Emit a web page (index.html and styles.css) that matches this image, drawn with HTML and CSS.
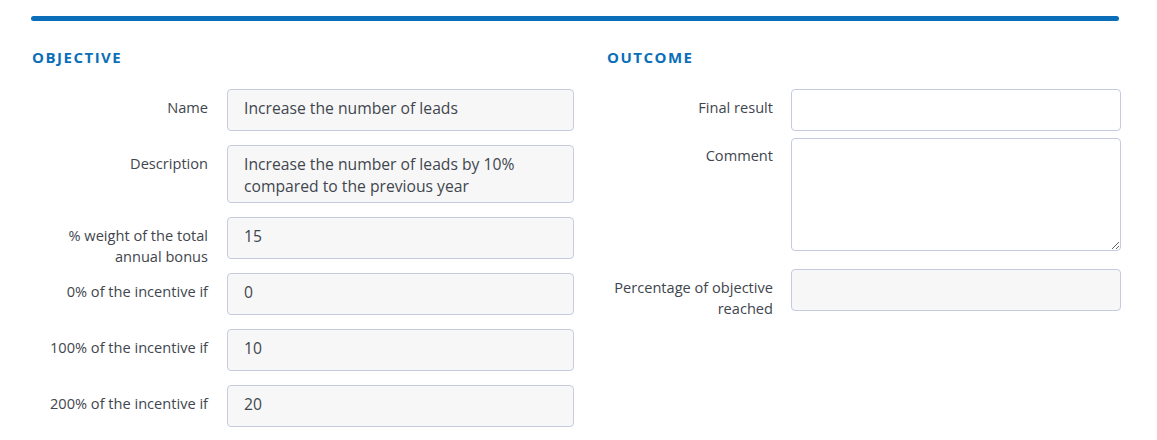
FILE: index.html
```html
<!DOCTYPE html>
<html lang="en">
<head>
<meta charset="utf-8">
<title>Objective</title>
<link rel="stylesheet" href="styles.css">
</head>
<body>
<div class="page">
  <div class="bar"></div>
  <div class="columns">
    <section class="col col-left">
      <h2 class="heading">OBJECTIVE</h2>
      <div class="row">
        <label class="label">Name</label>
        <input class="field readonly" type="text" value="Increase the number of leads" readonly>
      </div>
      <div class="row">
        <label class="label">Description</label>
        <div class="field readonly multi">Increase the number of leads by 10% compared to the previous year</div>
      </div>
      <div class="row">
        <label class="label">% weight of the total annual bonus</label>
        <input class="field readonly" type="text" value="15" readonly>
      </div>
      <div class="row">
        <label class="label">0% of the incentive if</label>
        <input class="field readonly" type="text" value="0" readonly>
      </div>
      <div class="row">
        <label class="label">100% of the incentive if</label>
        <input class="field readonly" type="text" value="10" readonly>
      </div>
      <div class="row">
        <label class="label">200% of the incentive if</label>
        <input class="field readonly" type="text" value="20" readonly>
      </div>
    </section>
    <section class="col col-right">
      <h2 class="heading">OUTCOME</h2>
      <div class="row">
        <label class="label">Final result</label>
        <input class="field" type="text" value="">
      </div>
      <div class="row row-tight">
        <label class="label label-comment">Comment</label>
        <textarea class="field area"></textarea>
      </div>
      <div class="row row-after-area">
        <label class="label">Percentage of objective reached</label>
        <input class="field readonly" type="text" value="" readonly>
      </div>
    </section>
  </div>
</div>
</body>
</html>
```
FILE: styles.css
```css
* { box-sizing: border-box; }
html, body { margin: 0; padding: 0; background: #ffffff; }
body {
  font-family: "Open Sans", "Noto Sans", Arial, sans-serif;
  font-size: 14.6px;
  color: #41464e;
}
.page {
  padding: 16px 37px 0 31px;
}
.bar {
  width: 1088px;
  height: 5px;
  border-radius: 3px;
  background: #0a6fb8;
}
.columns {
  display: grid;
  grid-template-columns: 543px 515px;
  column-gap: 32px;
  margin-top: 26px;
}
.col {
  display: flex;
  flex-direction: column;
}
.heading {
  margin: 0 0 22px 1px;
  font-size: 15px;
  line-height: 20px;
  font-weight: 700;
  letter-spacing: 1.5px;
  color: #0a6fb8;
}
.col-left .row {
  grid-template-columns: 177px 347px;
  column-gap: 19px;
}
.col-right .row {
  grid-template-columns: 167px 330px;
  column-gap: 18px;
}
.row {
  display: grid;
  align-items: start;
  margin-bottom: 14px;
}
.label {
  text-align: right;
  padding-top: 8px;
  margin-bottom: -20px;
  line-height: 21px;
  color: #41464e;
}
.field {
  display: block;
  width: 100%;
  height: 42px;
  margin: 0;
  padding: 6px 16px 10px;
  border: 1px solid #c6cbe2;
  border-radius: 4px;
  background: #ffffff;
  font-family: inherit;
  font-size: 15.7px;
  line-height: 22px;
  color: #41464e;
  outline: none;
}
.readonly {
  background: #f7f7f8;
}
.multi {
  height: 58px;
  padding: 7px 16px 5px;
}
.row-tight {
  margin-top: -7px;
}
.area {
  height: 113px;
  resize: vertical;
}
.label-comment {
  padding-top: 7px;
}
.row-after-area {
  margin-top: 4px;
}
```
